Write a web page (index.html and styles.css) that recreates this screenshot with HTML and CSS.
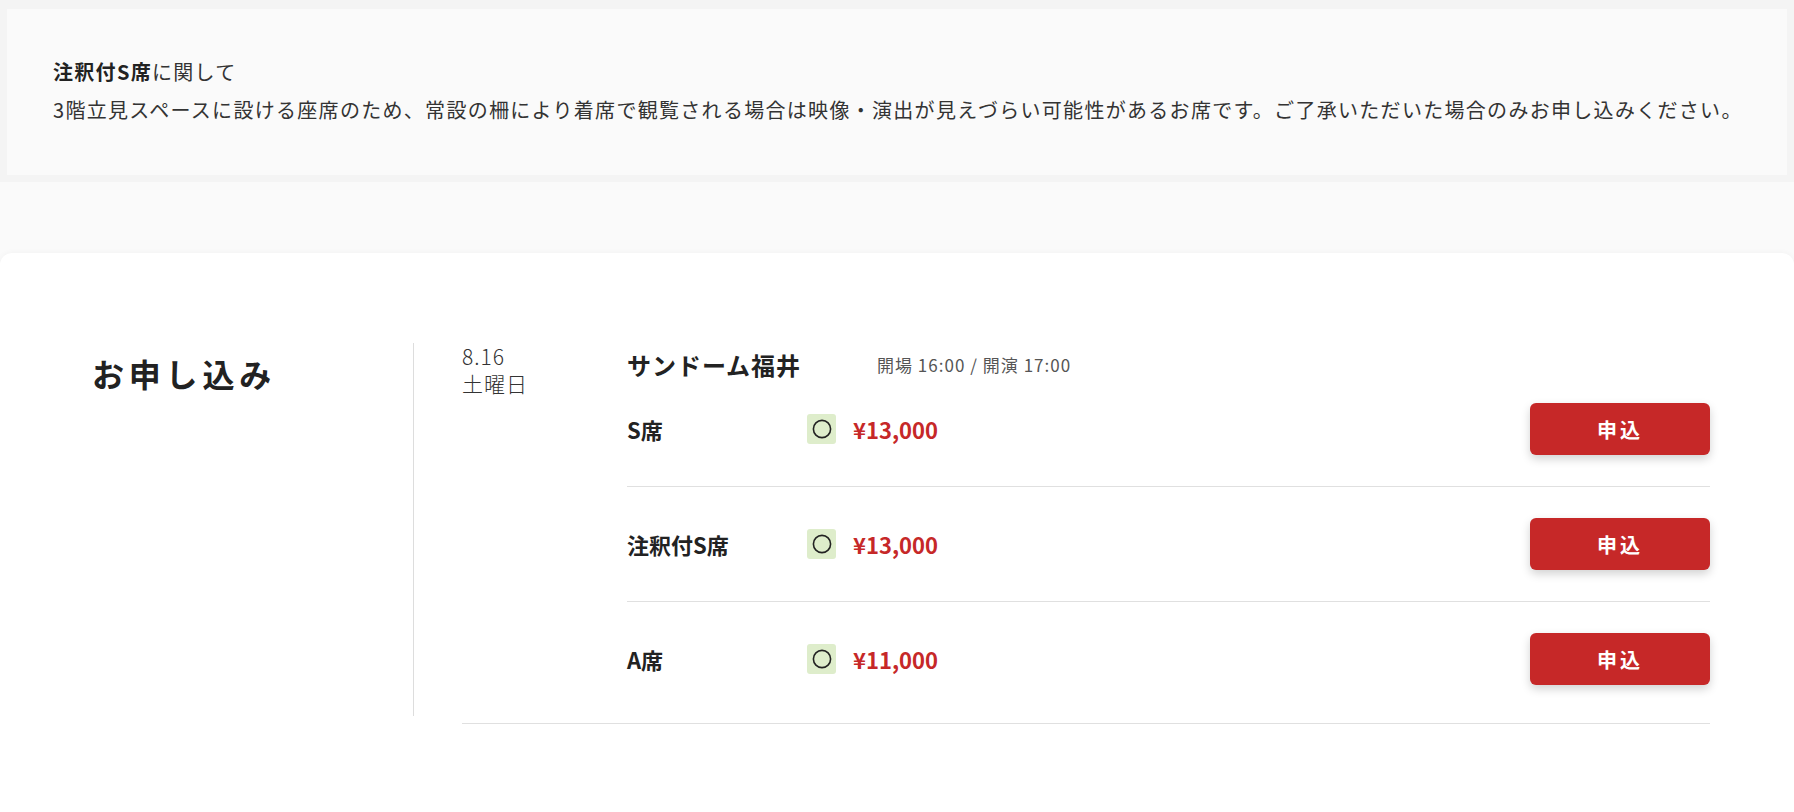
FILE: index.html
```html
<!DOCTYPE html>
<html lang="ja">
<head>
  <meta charset="UTF-8" />
  <meta name="viewport" content="width=device-width, initial-scale=1.0"/>
  <title>お申し込み</title>
  <link rel="stylesheet" href="styles.css">
</head>
<body>
  <!-- 注意書き -->
  <div class="notice-wrap">
    <div class="notice">
      <p><strong>注釈付S席</strong>に関して</p>
      <p>3階立見スペースに設ける座席のため、常設の柵により着席で観覧される場合は映像・演出が見えづらい可能性があるお席です。ご了承いただいた場合のみお申し込みください。</p>
    </div>
  </div>

  <!-- お申し込み -->
  <div class="card">
    <div class="entry">
      <h2 class="entry-title">お申し込み</h2>
      <div class="entry-body">
        <div class="show">
          <div class="date">
            <div>8.16</div>
            <div>土曜日</div>
          </div>
          <div class="venue">
            <div class="venue-head">
              <span class="venue-name">サンドーム福井</span>
              <span class="venue-time">開場 16:00 / 開演 17:00</span>
            </div>
            <div class="seat">
              <span class="seat-name">S席</span>
              <span class="stock" title="○"><svg width="22" height="22" viewBox="0 0 22 22"><circle cx="11" cy="11" r="8.6" fill="none" stroke="#222" stroke-width="1.6"/></svg></span>
              <span class="price">¥13,000</span>
              <button type="button">申込</button>
            </div>
            <div class="seat">
              <span class="seat-name">注釈付S席</span>
              <span class="stock" title="○"><svg width="22" height="22" viewBox="0 0 22 22"><circle cx="11" cy="11" r="8.6" fill="none" stroke="#222" stroke-width="1.6"/></svg></span>
              <span class="price">¥13,000</span>
              <button type="button">申込</button>
            </div>
            <div class="seat">
              <span class="seat-name">A席</span>
              <span class="stock" title="○"><svg width="22" height="22" viewBox="0 0 22 22"><circle cx="11" cy="11" r="8.6" fill="none" stroke="#222" stroke-width="1.6"/></svg></span>
              <span class="price">¥11,000</span>
              <button type="button">申込</button>
            </div>
          </div>
        </div>
      </div>
    </div>
    <div class="entry-rule"></div>
  </div>
</body>
</html>
```

FILE: styles.css
```css
body {
  font-family: 'Noto Sans CJK JP', 'Noto Sans', sans-serif;
  margin: 0;
  background-color: #fafafa;
  color: #333;
}
p {
  margin: 0;
}
.notice-wrap {
  background-color: #f4f4f4;
  padding: 9px 7px 7px;
}
.notice {
  background-color: #fafafa;
  padding: 44px 10px 46px 46px;
  font-size: 20px;
  line-height: 38px;
  letter-spacing: 1.3px;
  white-space: nowrap;
}
.notice strong {
  font-weight: 700;
  color: #222;
}
.card {
  margin-top: 71px;
  background-color: #fff;
  border-radius: 12px 12px 0 0;
  box-shadow: 0 0 6px rgba(0, 0, 0, 0.04);
  padding: 90px 84px 120px 92px;
}
.entry {
  display: flex;
  align-items: flex-start;
}
.entry-title {
  width: 321px;
  margin: 6px 0 0;
  font-size: 32px;
  line-height: 48px;
  font-weight: 700;
  letter-spacing: 0.15em;
  color: #222;
}
.entry-body {
  flex: 1;
  border-left: 1px solid #ddd;
  padding-left: 48px;
}
.entry-rule {
  margin: 7px 0 0 370px;
  border-top: 1px solid #e0e0e0;
}
.show {
  display: flex;
}
.date {
  width: 165px;
  font-size: 21px;
  line-height: 27px;
  font-weight: 300;
  letter-spacing: 1px;
}
.venue {
  flex: 1;
}
.venue-head {
  display: flex;
  align-items: center;
  padding-top: 8px;
  line-height: 28px;
}
.venue-name {
  font-size: 24px;
  font-weight: 700;
  letter-spacing: 0.04em;
  color: #222;
}
.venue-time {
  margin-left: 76px;
  font-size: 17px;
  color: #555;
  letter-spacing: 0.06em;
}
.seat {
  display: flex;
  align-items: center;
  padding: 31px 0;
  border-bottom: 1px solid #e0e0e0;
}
.venue-head + .seat {
  padding-top: 24px;
}
.seat:last-child {
  border-bottom: none;
}
.seat-name {
  width: 180px;
  font-size: 22px;
  font-weight: 700;
  color: #222;
}
.stock {
  display: flex;
  align-items: center;
  justify-content: center;
  width: 29px;
  height: 30px;
  border-radius: 3px;
  background-color: #deedcb;
}
.price {
  margin-left: 17px;
  font-size: 22px;
  font-weight: 700;
  color: #c62828;
}
button {
  margin-left: auto;
  width: 180px;
  height: 52px;
  border: none;
  border-radius: 6px;
  background-color: #c62828;
  color: #fff;
  font-family: inherit;
  font-size: 20px;
  font-weight: 700;
  letter-spacing: 0.15em;
  box-shadow: 0 4px 10px rgba(0, 0, 0, 0.18);
  cursor: pointer;
}
```
